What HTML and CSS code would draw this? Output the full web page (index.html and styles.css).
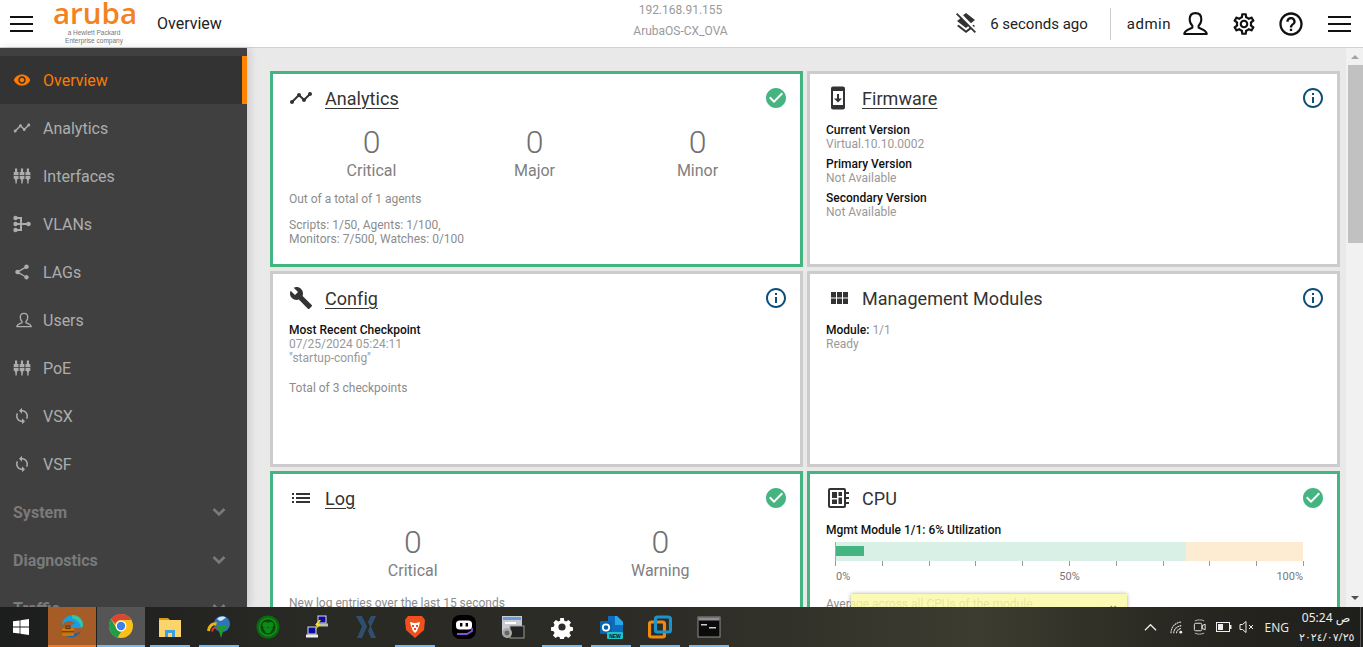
FILE: index.html
```html
<!DOCTYPE html>
<html lang="en">
<head>
<meta charset="utf-8">
<title>Overview</title>
<link rel="stylesheet" href="styles.css">
</head>
<body>
<svg class="sprite" xmlns="http://www.w3.org/2000/svg">
  <symbol id="i-eye" viewBox="0 0 24 24"><path d="M12 4.5C7 4.5 2.73 7.61 1 12c1.73 4.39 6 7.5 11 7.5s9.27-3.11 11-7.5c-1.73-4.39-6-7.5-11-7.5zM12 17c-2.76 0-5-2.24-5-5s2.24-5 5-5 5 2.24 5 5-2.24 5-5 5zm0-8c-1.66 0-3 1.34-3 3s1.34 3 3 3 3-1.34 3-3-1.34-3-3-3z"/></symbol>
  <symbol id="i-timeline" viewBox="0 0 24 24"><path d="M23 8c0 1.1-.9 2-2 2-.18 0-.35-.02-.51-.07l-3.56 3.55c.05.16.07.34.07.52 0 1.1-.9 2-2 2s-2-.9-2-2c0-.18.02-.36.07-.52l-2.55-2.55c-.16.05-.34.07-.52.07s-.36-.02-.52-.07l-4.55 4.56c.05.16.07.33.07.51 0 1.1-.9 2-2 2s-2-.9-2-2 .9-2 2-2c.18 0 .35.02.51.07l4.56-4.55C8.02 9.36 8 9.18 8 9c0-1.1.9-2 2-2s2 .9 2 2c0 .18-.02.36-.07.52l2.55 2.55c.16-.05.34-.07.52-.07s.36.02.52.07l3.55-3.56C19.02 8.35 19 8.18 19 8c0-1.1.9-2 2-2s2 .9 2 2z"/></symbol>
  <symbol id="i-ports" viewBox="0 0 18 18"><path d="M2 1.500h2.200V5H5.500v7H4.200v1.500h-.4V16.500H2.400v-3H2V12H.7V5H2zM7.900 1.500h2.200V5h1.300v7h-1.300v1.500h-.4V16.500H8.300v-3h-.4V12H6.600V5h1.300zM13.800 1.500H16V5h1.300v7H16v1.500h-.4V16.500h-1.400v-3h-.4V12h-1.300V5h1.300z"/><path fill="#404040" d="M.7 8.200h16.600v.8H.7z"/></symbol>
  <symbol id="i-vlan" viewBox="0 0 18 18"><circle cx="2.500" cy="3" r="2.200"/><circle cx="2.500" cy="15" r="2.200"/><circle cx="2.500" cy="9" r="2.200"/><circle cx="15.500" cy="9" r="2.300"/><path d="M2 2h7v14H2v-2h5v-4H2V8h5V4H2zM7 8h8v2H7z"/></symbol>
  <symbol id="i-share" viewBox="0 0 24 24"><path d="M18 16.080c-.76 0-1.440.3-1.960.77L8.910 12.700c.05-.23.09-.46.09-.7s-.04-.47-.09-.7l7.050-4.110c.54.5 1.250.81 2.040.81 1.660 0 3-1.340 3-3s-1.340-3-3-3-3 1.340-3 3c0 .24.04.47.09.7L8.040 9.810C7.500 9.310 6.790 9 6 9c-1.660 0-3 1.340-3 3s1.340 3 3 3c.79 0 1.500-.31 2.040-.81l7.120 4.160c-.05.21-.08.43-.08.65 0 1.610 1.310 2.920 2.920 2.920s2.920-1.310 2.920-2.920-1.310-2.920-2.920-2.920z"/></symbol>
  <symbol id="i-user" viewBox="0 0 24 24"><path fill="none" stroke="currentColor" stroke-width="2" stroke-linejoin="round" d="M12 2c-3.600 0-5.600 2.500-5.600 6 0 2.600 1 4.800 2.600 6.200v1.800c-2 1.300-7.300 1.700-7.800 6h21.600c-.5-4.300-5.800-4.700-7.800-6v-1.800c1.600-1.400 2.600-3.600 2.600-6.200 0-3.500-2-6-5.600-6z"/></symbol>
  <symbol id="i-sync" viewBox="0 0 24 24"><path d="M12 4V1L8 5l4 4V6c3.310 0 6 2.690 6 6 0 1.010-.25 1.970-.7 2.800l1.460 1.460C19.540 15.030 20 13.570 20 12c0-4.420-3.580-8-8-8zm0 14c-3.310 0-6-2.690-6-6 0-1.010.25-1.970.7-2.800L5.240 7.740C4.460 8.970 4 10.430 4 12c0 4.420 3.580 8 8 8v3l4-4-4-4v3z"/></symbol>
  <symbol id="i-chev" viewBox="0 0 14 10"><path fill="none" stroke="currentColor" stroke-width="2.600" d="M1.500 2l5.500 5.500L12.500 2"/></symbol>
  <symbol id="i-check" viewBox="0 0 24 24"><path d="M12 2C6.480 2 2 6.480 2 12s4.480 10 10 10 10-4.480 10-10S17.520 2 12 2zm-2 15l-5-5 1.410-1.410L10 14.170l7.590-7.590L19 8l-9 9z"/></symbol>
  <symbol id="i-info" viewBox="0 0 24 24"><path d="M11 17h2v-6h-2v6zm1-15C6.480 2 2 6.480 2 12s4.480 10 10 10 10-4.480 10-10S17.520 2 12 2zm0 18c-4.410 0-8-3.590-8-8s3.590-8 8-8 8 3.590 8 8-3.590 8-8 8zM11 9h2V7h-2v2z"/></symbol>
  <symbol id="i-phone" viewBox="0 0 24 24"><path d="M17 .5L7 .5c-1.100 0-2 .9-2 2v19c0 1.100.9 2 2 2h10c1.100 0 2-.9 2-2v-19c0-1.100-.9-2-2-2zM17 19H7V5h10v14zm-1-6.500h-3V8h-2v4.500H8l4 4 4-4z"/></symbol>
  <symbol id="i-wrench" viewBox="0 0 24 24"><path d="M22.700 19l-9.100-9.100c.9-2.300.4-5-1.500-6.900-2-2-5-2.400-7.400-1.300L9 6 6 9 1.600 4.700C.4 7.100.9 10.100 2.900 12.100c1.900 1.900 4.600 2.400 6.900 1.500l9.100 9.100c.4.4 1 .4 1.400 0l2.300-2.300c.5-.4.5-1.100.1-1.400z"/></symbol>
  <symbol id="i-list" viewBox="0 0 24 24"><path d="M3 13h2v-2H3v2zm0 4h2v-2H3v2zm0-8h2V7H3v2zm4 4h14v-2H7v2zm0 4h14v-2H7v2zM7 7v2h14V7H7z"/></symbol>
  <symbol id="i-grid" viewBox="0 0 24 24"><path d="M5 6h5v5.500H5zM11 6h5v5.500h-5zM17 6h5v5.500h-5zM5 12.500h5V18H5zM11 12.500h5V18h-5zM17 12.500h5V18h-5z"/></symbol>
  <symbol id="i-cpu" viewBox="0 0 24 24"><path fill-rule="evenodd" d="M4 2h14a2 2 0 0 1 2 2v16a2 2 0 0 1-2 2H4a2 2 0 0 1-2-2V4a2 2 0 0 1 2-2zm0 2v16h14V4z"/><path d="M6 6h5v6H6zM12.500 6H16v4h-3.500zM12.500 11.500H16V18h-3.500zM6 13.500h5V18H6zM20 6h3v2h-3zM20 11h3v2h-3zM20 16h3v2h-3z"/></symbol>
</svg>

<div class="app">
  <header class="topbar">
    <div class="top-left">
      <div class="burger"><span></span><span></span><span></span></div>
      <div class="logo">
        <div class="logo-word">aruba</div>
        <div class="logo-sub">a Hewlett Packard<br>Enterprise company</div>
      </div>
      <div class="page-name">Overview</div>
    </div>
    <div class="top-center">
      <div>192.168.91.155</div>
      <div>ArubaOS-CX_OVA</div>
    </div>
    <div class="top-right">
      <svg class="ti layers" viewBox="0 0 24 24"><path d="M19.810 14.990l1.190-.92-1.430-1.430-1.190.92 1.430 1.430zm-.45-5.720L21 8 12 1 9.090 3.270l7.870 7.880 2.400-1.880zM3.270 1L2 2.270l4.220 4.220L3 9l1.630 1.270L12 16l2.100-1.630 1.430 1.430L12 18.540l-7.370-5.730L3 14.070l9 7 4.950-3.850L20.730 21 22 19.730 3.270 1z"/></svg>
      <span class="ago">6 seconds ago</span>
      <span class="divider"></span>
      <span class="who">admin</span>
      <svg class="ti t-user"><use href="#i-user"/></svg>
      <svg class="ti t-gear" viewBox="0 0 24 24"><path d="M19.430 12.980c.04-.32.07-.64.07-.98 0-.34-.03-.66-.07-.98l2.110-1.650c.19-.15.24-.42.12-.64l-2-3.460c-.09-.16-.26-.25-.44-.25-.06 0-.12.01-.17.03l-2.490 1c-.52-.4-1.080-.73-1.690-.98l-.38-2.650C14.460 2.180 14.250 2 14 2h-4c-.25 0-.46.18-.49.42l-.38 2.650c-.61.25-1.170.59-1.690.98l-2.490-1c-.06-.02-.12-.03-.18-.03-.17 0-.34.09-.43.25l-2 3.460c-.13.22-.07.49.12.64l2.110 1.650c-.04.32-.07.65-.07.98 0 .33.03.66.07.98l-2.110 1.650c-.19.15-.24.42-.12.64l2 3.460c.09.16.26.25.44.25.06 0 .12-.01.17-.03l2.490-1c.52.4 1.080.73 1.690.98l.38 2.650c.03.24.24.42.49.42h4c.25 0 .46-.18.49-.42l.38-2.650c.61-.25 1.170-.59 1.690-.98l2.490 1c.06.02.12.03.18.03.17 0 .34-.09.43-.25l2-3.460c.12-.22.07-.49-.12-.64l-2.110-1.650zm-1.980-1.710c.04.31.05.52.05.73 0 .21-.02.43-.05.73l-.14 1.130.89.7 1.080.84-.7 1.210-1.270-.51-1.040-.42-.9.68c-.43.32-.84.56-1.250.73l-1.060.43-.16 1.130-.2 1.350h-1.400l-.19-1.350-.16-1.130-1.060-.43c-.43-.18-.83-.41-1.230-.71l-.91-.7-1.060.43-1.270.51-.7-1.210 1.080-.84.89-.7-.14-1.130c-.03-.31-.05-.54-.05-.74s.02-.43.05-.73l.14-1.130-.89-.7-1.080-.84.7-1.210 1.270.51 1.040.42.9-.68c.43-.32.84-.56 1.250-.73l1.060-.43.16-1.130.2-1.350h1.390l.19 1.350.16 1.130 1.060.43c.43.18.83.41 1.230.71l.91.7 1.060-.43 1.270-.51.7 1.210-1.070.85-.89.7.14 1.130zM12 8c-2.210 0-4 1.790-4 4s1.790 4 4 4 4-1.790 4-4-1.790-4-4-4zm0 6c-1.100 0-2-.9-2-2s.9-2 2-2 2 .9 2 2-.9 2-2 2z"/></svg>
      <svg class="ti t-help" viewBox="0 0 24 24"><path d="M11 18h2v-2h-2v2zm1-16C6.480 2 2 6.480 2 12s4.480 10 10 10 10-4.480 10-10S17.520 2 12 2zm0 18c-4.410 0-8-3.590-8-8s3.590-8 8-8 8 3.590 8 8-3.590 8-8 8zm0-14c-2.210 0-4 1.790-4 4h2c0-1.100.9-2 2-2s2 .9 2 2c0 2-3 1.750-3 5h2c0-2.250 3-2.500 3-5 0-2.210-1.790-4-4-4z"/></svg>
      <div class="burger end"><span></span><span></span><span></span></div>
    </div>
  </header>

  <div class="body-row">
    <nav class="sidebar">
      <a class="nav-item active"><svg class="ni"><use href="#i-eye"/></svg>Overview</a>
      <a class="nav-item"><svg class="ni"><use href="#i-timeline"/></svg>Analytics</a>
      <a class="nav-item"><svg class="ni"><use href="#i-ports"/></svg>Interfaces</a>
      <a class="nav-item"><svg class="ni"><use href="#i-vlan"/></svg>VLANs</a>
      <a class="nav-item"><svg class="ni"><use href="#i-share"/></svg>LAGs</a>
      <a class="nav-item"><svg class="ni ni-user"><use href="#i-user"/></svg>Users</a>
      <a class="nav-item"><svg class="ni"><use href="#i-ports"/></svg>PoE</a>
      <a class="nav-item"><svg class="ni"><use href="#i-sync"/></svg>VSX</a>
      <a class="nav-item"><svg class="ni"><use href="#i-sync"/></svg>VSF</a>
      <a class="nav-group">System<svg class="chev"><use href="#i-chev"/></svg></a>
      <a class="nav-group">Diagnostics<svg class="chev"><use href="#i-chev"/></svg></a>
      <a class="nav-group">Traffic<svg class="chev"><use href="#i-chev"/></svg></a>
    </nav>

    <main class="content">
      <section class="card ok">
        <div class="card-head"><svg class="ci"><use href="#i-timeline"/></svg><h2 class="link">Analytics</h2><svg class="state good"><use href="#i-check"/></svg></div>
        <div class="stats three">
          <div class="stat"><div class="num">0</div><div class="lbl">Critical</div></div>
          <div class="stat"><div class="num">0</div><div class="lbl">Major</div></div>
          <div class="stat"><div class="num">0</div><div class="lbl">Minor</div></div>
        </div>
        <p class="note after-stats">Out of a total of 1 agents</p>
        <p class="note gap12">Scripts: 1/50, Agents: 1/100,<br>Monitors: 7/500, Watches: 0/100</p>
      </section>

      <section class="card">
        <div class="card-head"><svg class="ci"><use href="#i-phone"/></svg><h2 class="link">Firmware</h2><svg class="state inf"><use href="#i-info"/></svg></div>
        <div class="kv first"><b>Current Version</b><span>Virtual.10.10.0002</span></div>
        <div class="kv"><b>Primary Version</b><span>Not Available</span></div>
        <div class="kv"><b>Secondary Version</b><span>Not Available</span></div>
      </section>

      <section class="card">
        <div class="card-head"><svg class="ci"><use href="#i-wrench"/></svg><h2 class="link">Config</h2><svg class="state inf"><use href="#i-info"/></svg></div>
        <div class="kv first"><b>Most Recent Checkpoint</b><span>07/25/2024 05:24:11</span><span>"startup-config"</span></div>
        <p class="note gap16">Total of 3 checkpoints</p>
      </section>

      <section class="card">
        <div class="card-head"><svg class="ci"><use href="#i-grid"/></svg><h2>Management Modules</h2><svg class="state inf"><use href="#i-info"/></svg></div>
        <div class="kv first"><div><b>Module:</b> <span class="inline">1/1</span></div><span>Ready</span></div>
      </section>

      <section class="card ok">
        <div class="card-head"><svg class="ci"><use href="#i-list"/></svg><h2 class="link">Log</h2><svg class="state good"><use href="#i-check"/></svg></div>
        <div class="stats">
          <div class="stat"><div class="num">0</div><div class="lbl">Critical</div></div>
          <div class="stat"><div class="num">0</div><div class="lbl">Warning</div></div>
        </div>
        <p class="note after-log">New log entries over the last 15 seconds</p>
      </section>

      <section class="card ok">
        <div class="card-head"><svg class="ci"><use href="#i-cpu"/></svg><h2>CPU</h2><svg class="state good"><use href="#i-check"/></svg></div>
        <div class="kv first"><b>Mgmt Module 1/1: 6% Utilization</b></div>
        <div class="meter">
          <div class="track"><div class="zone-ok"></div><div class="zone-warn"></div><div class="value"></div></div>
          <div class="ticks"></div>
          <div class="scale"><span>0%</span><span>50%</span><span>100%</span></div>
        </div>
        <p class="note after-meter">Average across all CPUs of the module</p>
      </section>

      <div class="tooltip"><span class="tip-close">✕</span></div>
    </main>

    <aside class="scrollbar">
      <span class="arrow up"></span>
      <div class="thumb"></div>
      <span class="arrow down"></span>
    </aside>
  </div>
</div>

<footer class="taskbar">
  <div class="start">
    <svg class="win" viewBox="0 0 16 16"><path fill="#fff" d="M0 2.300l6.600-.9v6.200H0zM7.400 1.300L16 0v7.600H7.400zM0 8.400h6.600v6.200L0 13.700zM7.400 8.400H16V16l-8.600-1.300z"/></svg>
  </div>
  <div class="task tk-edge">
    <svg class="app-i" viewBox="0 0 24 24"><path fill="#1b9de2" d="M2 12C2 5 7 1 12.500 1 18.500 1 23 5.500 23 11c0 2-1.500 3-3.500 3H10c0-3 3-4 5-4-1-2-3-3-5-3-4 0-7 2-8 5z"/><path fill="#35c6a0" d="M12 1c6.500 0 11 4.500 11 10 0 1.500-1 2.500-2 3-.5-5-4-9-9-9.500z"/><path fill="#1565b0" d="M9 23c-4-1-7-5-7-9 1 4 5 6 9 6 4 0 8-1 10-3-2 4-7 7-12 6z"/><rect x="2" y="14" width="12" height="8" rx="1" fill="#c9760e"/><rect x="2" y="17" width="12" height="1.400" fill="#7a3f05"/><rect x="6" y="12" width="4" height="2.500" fill="none" stroke="#5d3306" stroke-width="1"/></svg>
  </div>
  <div class="task tk-chrome">
    <svg class="app-i" viewBox="0 0 24 24"><circle cx="12" cy="12" r="12" fill="#fbc116"/><path fill="#db4437" d="M12 0a12 12 0 0 1 10.400 6H12a6 6 0 0 0-5.700 4L2.100 5A12 12 0 0 1 12 0z"/><path fill="#1e9e4a" d="M2.100 5l5 8.800A6 6 0 0 0 12 18l-3.500 5.500A12 12 0 0 1 2.100 5z"/><circle cx="12" cy="12" r="5.400" fill="#fff"/><circle cx="12" cy="12" r="4.200" fill="#3f80ec"/></svg>
  </div>
  <div class="task mark">
    <svg class="app-i" viewBox="0 0 24 24"><path fill="#d89d12" d="M1 3h9l2 2h-11z"/><path fill="#fbd46b" d="M1 5h22v17H1z"/><path fill="#3e9fe0" d="M7 22v-7h10v7h-3v-4h-4v4z"/></svg>
  </div>
  <div class="task mark">
    <svg class="app-i" viewBox="0 0 24 24"><circle cx="15" cy="9" r="8" fill="#2f73b8"/><path fill="#d5e6f0" d="M10 4c3-3 7-3 9-1-2 0-3 3-6 3z"/><path fill="none" stroke="#e6b619" stroke-width="3" d="M1.500 16c.5-5 4-8 8-7"/><path fill="none" stroke="#d43a2a" stroke-width="2" d="M5 16.500c.5-3 2.500-4 4.500-4"/><path fill="#1f9a32" d="M9 10h13l-5.500 5-2.500 8-2-7z"/></svg>
  </div>
  <div class="task">
    <svg class="app-i" viewBox="0 0 24 24"><circle cx="12" cy="12" r="11.500" fill="#0a6a0e"/><circle cx="12" cy="12" r="8.500" fill="#0b4a0e" stroke="#109418" stroke-width="1.500"/><circle cx="9.500" cy="10" r="3" fill="#0f8a16"/><circle cx="14.500" cy="10" r="3" fill="#0f8a16"/><path fill="#0f8a16" d="M7 13h10l-3 5h-4z"/></svg>
  </div>
  <div class="task">
    <svg class="app-i" viewBox="0 0 24 24"><rect x="13" y="1" width="8" height="7" fill="#0a0aa8" stroke="#ddd"/><rect x="11" y="8.500" width="12" height="3" fill="#bbb"/><rect x="3" y="12" width="8" height="7" fill="#0a0aa8" stroke="#ddd"/><rect x="1" y="19.500" width="12" height="3" fill="#eee"/><path fill="#f5e11d" d="M14 5l-4 5h3l-3 5 6-6h-3l3-4z"/></svg>
  </div>
  <div class="task">
    <svg class="app-i" viewBox="0 0 24 24"><path fill="#2f4f70" d="M2 1h6l5 10.500L8 23H3l5-11.500zM17 1h5l-5 10.500L22 23h-5l-3-7 2-4.500-2-4.500z"/></svg>
  </div>
  <div class="task mark">
    <svg class="app-i" viewBox="0 0 24 24"><path fill="#f0501e" d="M5 1h14l3 4-1 10-9 8-9-8L2 5z"/><path fill="#fff" d="M7 7l4 1h2l4-1-1 4-2 5-2 2-2-2-2-5z"/><path fill="#f0501e" d="M9 10h2v2H9zM13 10h2v2h-2zM11 13h2v2h-2z"/></svg>
  </div>
  <div class="task">
    <svg class="app-i" viewBox="0 0 24 24"><rect width="24" height="24" rx="8" fill="#000"/><rect x="4" y="5.500" width="16" height="9" rx="3.500" fill="#fff"/><rect x="8" y="8" width="2.400" height="3.500" fill="#000"/><rect x="13.600" y="8" width="2.400" height="3.500" fill="#000"/><path fill="none" stroke="#8a4fe0" stroke-width="1.800" d="M5 19h10l5-3v-3"/></svg>
  </div>
  <div class="task">
    <svg class="app-i" viewBox="0 0 24 24"><rect x="1" y="1" width="20" height="18" fill="#c8ccd2"/><rect x="2" y="2" width="18" height="3" fill="#6c9bdd"/><rect x="4" y="7" width="11" height="2" fill="#fff"/><rect x="9" y="11" width="14" height="12" fill="#222" stroke="#999"/><circle cx="6" cy="18" r="5" fill="#aaa"/><circle cx="6" cy="18" r="2.500" fill="#666"/></svg>
  </div>
  <div class="task mark">
    <svg class="app-i gear-w" viewBox="0 0 24 24"><path fill="#fff" fill-rule="evenodd" d="M10 2h4l.6 3 2 .9 2.600-1.700 2.800 2.800-1.700 2.600.9 2 3 .6v4l-3 .6-.9 2 1.700 2.600-2.800 2.800-2.600-1.700-2 .9-.6 3h-4l-.6-3-2-.9-2.600 1.700-2.800-2.800 1.700-2.600-.9-2-3-.6v-4l3-.6.9-2L2.500 7l2.800-2.800 2.600 1.700 2-.9zM12 8a4 4 0 1 0 0 8 4 4 0 0 0 0-8z" transform="translate(1.200 1.200) scale(.9)"/></svg>
  </div>
  <div class="task mark">
    <svg class="app-i" viewBox="0 0 24 24"><path fill="#0f6cbd" d="M9 1h9l6 6v10H9z"/><path fill="#28a8ea" d="M16 1h2l6 6v3h-8z"/><rect x="1" y="6" width="12" height="13" rx="1" fill="#0a64ad"/><circle cx="7" cy="12.500" r="3.200" fill="none" stroke="#fff" stroke-width="1.800"/><rect x="8" y="17" width="16" height="7" rx="1" fill="#17c5c9"/><text class="new-txt" x="16" y="22.800" text-anchor="middle">NEW</text></svg>
  </div>
  <div class="task mark">
    <svg class="app-i" viewBox="0 0 24 24"><rect x="1.500" y="7" width="15" height="15" rx="2" fill="none" stroke="#ee8a12" stroke-width="3.200"/><rect x="7.500" y="2" width="15" height="15" rx="2" fill="none" stroke="#1e93c9" stroke-width="3.200"/></svg>
  </div>
  <div class="task mark">
    <svg class="app-i" viewBox="0 0 24 24"><rect x="1" y="2" width="22" height="20" fill="#0b0b0b" stroke="#8f8f8f"/><rect x="1.500" y="2.500" width="21" height="3" fill="#8f8f8f"/><rect x="4" y="9" width="6" height="1.500" fill="#ccc"/><rect x="12" y="12" width="7" height="1.500" fill="#ccc"/></svg>
  </div>

  <div class="tray">
    <svg class="tr t-chev" viewBox="0 0 14 14"><path d="M1 10l6-6 6 6" fill="none" stroke="#eee" stroke-width="1.300"/></svg>
    <svg class="tr t-wifi" viewBox="0 0 16 16"><path d="M1 14C1 8 5 3 12 2M4 14c0-4 3-7 8-8M7 14c0-2.500 2-4.500 5-5" fill="none" stroke="#e6e6e6" stroke-width="1.100" stroke-dasharray="2 .6"/><circle cx="11.500" cy="13" r="1.500" fill="#eee"/></svg>
    <svg class="tr t-meet" viewBox="0 0 16 18"><rect x="2.500" y="5" width="8" height="8" rx="1.500" fill="none" stroke="#eee"/><path d="M11 7.500l3-1.500v6l-3-1.500z" fill="none" stroke="#eee"/><path d="M3 2.500c3-1.500 7-1.500 10 0M3 15.500c3 1.500 7 1.500 10 0" fill="none" stroke="#bbb"/></svg>
    <svg class="tr t-batt" viewBox="0 0 16 12"><rect x=".5" y="1.500" width="13" height="9" fill="none" stroke="#eee"/><rect x="2" y="3" width="5" height="6" fill="#eee"/><rect x="14" y="4" width="1.500" height="4" fill="#eee"/></svg>
    <svg class="tr t-vol" viewBox="0 0 16 14"><path d="M1 4.500h2.500L7 1.500v11L3.500 9.500H1z" fill="none" stroke="#eee"/><path d="M10 5l4 4M14 5l-4 4" stroke="#eee"/></svg>
    <span class="lang">ENG</span>
    <div class="clock"><div>05:24 ص</div><div class="date">٢٠٢٤/٠٧/٢٥</div></div>
    <span class="desk"></span>
  </div>
</footer>
</body>
</html>
```
FILE: styles.css
```css
* { box-sizing: border-box; }
html, body { margin: 0; height: 100%; }
body {
  width: 1363px;
  height: 647px;
  overflow: hidden;
  font-family: Roboto, "Liberation Sans", sans-serif;
  display: flex;
  flex-direction: column;
  background: #fff;
}
.sprite { display: none; }
.app { height: 607px; display: flex; flex-direction: column; overflow: hidden; }

/* top bar */
.topbar {
  height: 48px;
  flex: none;
  display: grid;
  grid-template-columns: 1fr auto 1fr;
  align-items: center;
  padding: 0 12px 0 10px;
  background: #fff;
  border-bottom: 1px solid #d2d2d2;
}
.top-left { display: flex; align-items: center; height: 47px; }
.burger { width: 23px; display: flex; flex-direction: column; gap: 5px; }
.burger span { display: block; height: 2px; background: #111; }
.logo { margin-left: 20px; width: 82px; padding-top: 1px; text-align: center; align-self: flex-start; }
.logo-word {
  font-family: "Open Sans", sans-serif;
  font-weight: 600;
  font-size: 29.500px;
  line-height: 24px;
  color: #f58220;
}
.logo-sub { font-family: "Liberation Sans", sans-serif; font-size: 6.500px; line-height: 7.500px; color: #777; margin-top: 4px; }
.page-name { margin-left: 22px; font-size: 16px; color: #222; }
.top-center { text-align: center; font-size: 12px; line-height: 21px; color: #9a9a9a; margin-top: -5px; }
.top-right { display: flex; align-items: center; justify-content: flex-end; color: #222; font-size: 15px; }
.ti { fill: #111; color: #111; flex: none; }
.layers { width: 24px; height: 24px; fill: #333; }
.ago { margin-left: 12px; }
.divider { width: 1px; height: 32px; background: #ccc; margin: 0 16px 0 22px; }
.who { letter-spacing: .5px; }
.t-user { width: 25px; height: 25px; margin-left: 12px; }
.t-gear { width: 26px; height: 26px; margin-left: 23px; }
.t-help { width: 28px; height: 28px; margin-left: 20px; }
.burger.end { margin-left: 23px; }

/* layout */
.body-row { flex: 1; min-height: 0; display: flex; }
.sidebar {
  width: 247px;
  flex: none;
  background: #404040;
  padding-top: 8px;
  overflow: hidden;
  font-size: 16px;
  position: relative;
  z-index: 1;
  box-shadow: 3px 0 8px rgba(0, 0, 0, .12);
}
.nav-item {
  height: 48px;
  display: flex;
  align-items: center;
  padding-left: 13px;
  color: #adadad;
}
.ni { width: 18px; height: 18px; margin-right: 12px; fill: #adadad; color: #adadad; flex: none; }
.ni-user { width: 16px; height: 16px; margin-left: 3px; margin-right: 11px; }
.nav-item.active { background: #333; color: #ff7a00; border-right: 5px solid #ff8300; }
.nav-item.active .ni { fill: #ff7a00; }
.nav-group {
  height: 48px;
  display: flex;
  align-items: center;
  justify-content: space-between;
  padding: 0 21px 0 13px;
  color: #7a7a7a;
  font-weight: 700;
}
.chev { width: 14px; height: 10px; color: #7a7a7a; }

/* content */
.content {
  width: 1099px;
  flex: none;
  background: #e9e9e9;
  padding: 23px 6px 0 23px;
  display: grid;
  grid-template-columns: 1fr 1fr;
  grid-auto-rows: 196px;
  gap: 4px 4px;
  overflow: hidden;
  position: relative;
}
.card { background: #fff; border: 3px solid #ccc; padding: 0 16px; min-width: 0; }
.card.ok { border-color: #44b581; }
.card-head { height: 48px; display: flex; align-items: center; }
.card-head h2 { margin: 0; font-size: 18px; font-weight: 400; color: #333; flex: 1; letter-spacing: .05px; }
.card-head h2.link { text-decoration: underline; text-underline-offset: 3px; text-decoration-thickness: 1px; }
.ci { width: 24px; height: 24px; margin-right: 12px; fill: #333; flex: none; }
.state { width: 24px; height: 24px; flex: none; margin-right: -4px; }
.good { fill: #44b581; }
.inf { fill: #0b4f79; }
.stats { display: flex; margin-top: 2px; }
.stats.three { margin: 2px 5px 0 1px; }
.stat { flex: 1; text-align: center; }
.num { font-size: 32px; font-weight: 300; line-height: 36px; color: #707070; }
.lbl { font-size: 16px; line-height: 22px; color: #808080; }
.note { margin: 0; font-size: 12px; line-height: 14px; color: #8c8c8c; }
.after-stats { margin-top: 10px; }
.after-log { margin-top: 14px; }
.after-meter { margin-top: 14px; }
.gap12 { margin-top: 12px; }
.gap16 { margin-top: 16px; }
.kv { font-size: 12px; line-height: 14px; margin-bottom: 6px; color: #999; }
.kv.first { margin-top: 1px; }
.kv b { display: block; font-weight: 500; color: #111; }
.kv span { display: block; }
.kv div b { display: inline; }
.kv .inline { display: inline; }
.meter { margin: -1px 0 0 9px; width: 468px; font-size: 11px; color: #777; }
.track { height: 19px; display: flex; position: relative; border-left: 1px solid #aaa; }
.zone-ok { width: 75%; background: #d9f0e6; }
.zone-warn { width: 25%; background: #fdecd2; }
.value { position: absolute; left: 0; top: 4px; width: 28px; height: 10px; background: #44b581; }
.ticks {
  height: 5px;
  width: 469px;
  background: repeating-linear-gradient(to right, #999 0 1px, transparent 1px 46.800px);
}
.scale { display: grid; grid-template-columns: 1fr auto 1fr; line-height: 12px; margin-top: 5px; padding-left: 1px; }
.scale span:last-child { text-align: right; }

/* tooltip laid over the CPU card */
.tooltip {
  position: absolute;
  left: 604px;
  top: 546px;
  width: 276px;
  height: 40px;
  background: rgba(250, 249, 165, .82);
  box-shadow: 0 0 4px rgba(0, 0, 0, .35);
  display: flex;
  justify-content: flex-end;
}
.tip-close { font-size: 10px; line-height: 14px; margin: 8px 10px 0 0; color: #777; }

/* scrollbar */
.scrollbar {
  width: 17px;
  flex: none;
  background: #f1f1f1;
  display: flex;
  flex-direction: column;
  align-items: flex-end;
  position: relative;
}
.thumb { width: 15px; height: 178px; background: #c1c1c1; margin-top: 6px; }
.arrow { display: block; width: 0; height: 0; border-left: 4px solid transparent; border-right: 4px solid transparent; margin-right: 4px; }
.arrow.up { border-bottom: 4px solid #a3a3a3; margin-top: 7px; }
.arrow.down { border-top: 4px solid #505050; margin-top: auto; margin-bottom: 7px; }

/* taskbar */
.taskbar {
  height: 40px;
  flex: none;
  display: flex;
  align-items: stretch;
  gap: 1px;
  background: linear-gradient(to right, #1c1d1d 0, #2a2a25 25%, #2d2c26 50%, #3d3c30 72%, #27261f 88%, #1e1e1c 100%);
  color: #eee;
}
.start { width: 47px; display: flex; align-items: center; padding-left: 13px; }
.win { width: 16px; height: 16px; }
.task {
  width: 48px;
  display: flex;
  align-items: center;
  justify-content: center;
  position: relative;
}
.task.mark::after {
  content: "";
  position: absolute;
  left: 4px;
  right: 4px;
  bottom: 0;
  height: 2px;
  background: #76b9ed;
}
.tk-edge { background: #a65c26; border-bottom: 2px solid #f47a1f; }
.tk-chrome { background: #555; border-bottom: 2px solid #76b9ed; }
.app-i { width: 24px; height: 24px; }
.new-txt { font: 700 5px "Liberation Sans", sans-serif; fill: #111; }
.tray { margin-left: auto; display: flex; align-items: center; font-family: "Noto Sans", "DejaVu Sans", sans-serif; }
.tr { flex: none; }
.t-chev { width: 13px; height: 13px; }
.t-wifi { width: 15px; height: 15px; margin-left: 13px; }
.t-meet { width: 15px; height: 18px; margin-left: 7px; }
.t-batt { width: 16px; height: 12px; margin-left: 9px; }
.t-vol { width: 16px; height: 14px; margin-left: 7px; }
.lang { font-size: 12px; margin-left: 10px; font-family: "Open Sans", sans-serif; }
.clock { font-size: 12px; line-height: 19px; text-align: center; margin-left: 10px; width: 54px; white-space: nowrap; }
.date { font-size: 11px; letter-spacing: -.3px; }
.desk { width: 1px; height: 40px; background: #555; margin-left: 7px; margin-right: 2px; }
```
